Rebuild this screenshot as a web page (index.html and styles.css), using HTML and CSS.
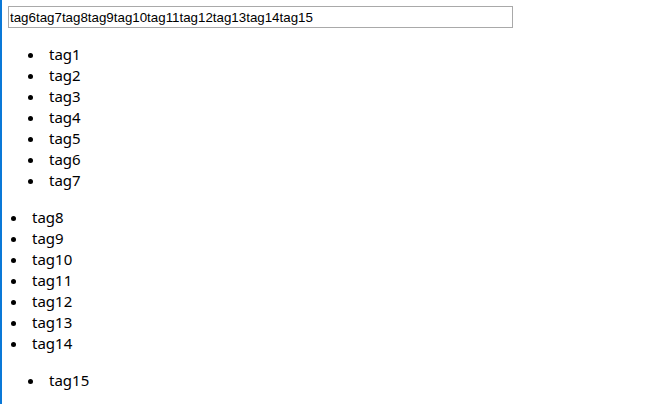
FILE: index.html
```html
<!DOCTYPE html>
<html lang="en">
<head>
    <meta charset="UTF-8">
    <meta name="viewport" content="width=device-width, initial-scale=1.0">
    <title>Tags</title>
    <link rel="stylesheet" href="styles.css">
</head>
<body>
    <div class="page">
        <input type="text" class="tag-input" value="tag6tag7tag8tag9tag10tag11tag12tag13tag14tag15">

        <ul class="tag-list">
            <li>tag1</li>
            <li>tag2</li>
            <li>tag3</li>
            <li>tag4</li>
            <li>tag5</li>
            <li>tag6</li>
            <li>tag7</li>
        </ul>

        <ul class="tag-list flat">
            <li>tag8</li>
            <li>tag9</li>
            <li>tag10</li>
            <li>tag11</li>
            <li>tag12</li>
            <li>tag13</li>
            <li>tag14</li>
        </ul>

        <ul class="tag-list">
            <li>tag15</li>
        </ul>
    </div>
</body>
</html>
```

FILE: styles.css
```css
html, body {
    margin: 0;
    height: 100%;
    background: #fff;
}
.page {
    box-sizing: border-box;
    min-height: 100%;
    border-left: 2px solid #0a78d7;
    padding: 6px 0 0 6px;
    font-family: "Noto Sans", sans-serif;
    font-size: 15px;
    color: #000;
}
.tag-input {
    display: block;
    box-sizing: border-box;
    width: 505px;
    height: 22px;
    margin: 0;
    padding: 1px 1px;
    border: 1px solid #a9a9a9;
    font-family: "Liberation Sans", Arial, sans-serif;
    font-size: 13.33px;
    color: #000;
    outline: none;
}
.tag-list {
    margin: 16px 0 0 -8px;
    padding-left: 45px;
    line-height: 21px;
}
/* push the text right, leaving the bullet where it is */
.tag-list li {
    padding-left: 4px;
}
.tag-list.flat {
    padding-left: 28px;
}
```
